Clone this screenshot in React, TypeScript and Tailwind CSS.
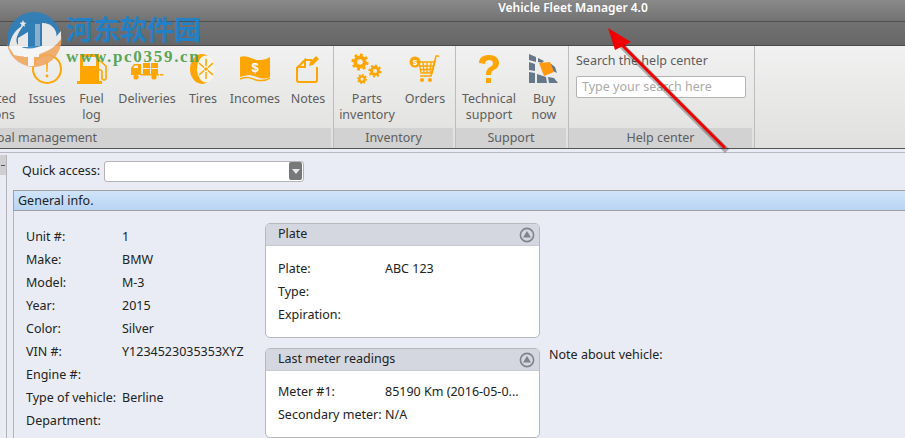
const font = "font-['Noto_Sans',sans-serif]";

function IssuesIcon() {
  return (
    <svg width="32" height="32" viewBox="0 0 32 32">
      <circle cx="16" cy="16" r="14" fill="none" stroke="#ffa500" strokeWidth="2" />
      <path d="M15 8h2l-.4 11h-1.2z" fill="#ffa500" />
      <circle cx="16" cy="23" r="1.400" fill="#ffa500" />
    </svg>
  );
}

function FuelIcon() {
  return (
    <svg width="32" height="32" viewBox="0 0 32 32">
      <path fillRule="evenodd" d="M4 1h19v27H4zM7 4v9h13V4z" fill="#ffa500" />
      <rect x="1" y="28" width="25" height="3" fill="#ffa500" />
      <path d="M23 7l7 6v12a2 2 0 0 1-4 0v-6a2 2 0 0 0-3-2" fill="none" stroke="#ffa500" strokeWidth="1.600" />
    </svg>
  );
}

function DeliveriesIcon() {
  return (
    <svg width="34" height="32" viewBox="0 0 34 32">
      <path d="M1 19v-4l3-4h7v11H1z" fill="#ffa500" />
      <path d="M3 15l2-2.500h3V15z" fill="#f0f0f0" />
      <rect x="13" y="10" width="7" height="5" fill="#ffa500" />
      <rect x="21" y="10" width="7" height="5" fill="#ffa500" />
      <rect x="13" y="16" width="7" height="5" fill="#ffa500" />
      <rect x="21" y="16" width="7" height="5" fill="#ffa500" />
      <rect x="11" y="21" width="18" height="1.500" fill="#ffa500" />
      <rect x="30" y="21" width="3.500" height="1.500" fill="#ffa500" />
      <circle cx="6" cy="24" r="2.600" fill="#ffa500" />
      <circle cx="24" cy="24" r="2.600" fill="#ffa500" />
    </svg>
  );
}

function TiresIcon() {
  return (
    <svg width="26" height="32" viewBox="0 0 26 32">
      <ellipse cx="12" cy="16" rx="12" ry="15" fill="#ffa500" />
      <ellipse cx="16" cy="16" rx="9" ry="13.500" fill="#f8f4ea" />
      <path d="M16 6v7M16 19v7M9 10l5 4.500M23 10l-5 4.500M9 22l5-4.500M23 22l-5-4.500" stroke="#ffa500" strokeWidth="1.500" />
      <circle cx="16" cy="16" r="1.800" fill="#ffa500" />
    </svg>
  );
}

function IncomesIcon() {
  return (
    <svg width="32" height="32" viewBox="0 0 32 32">
      <path d="M1 4c8-3 13 4 20 3 4 0 7-1 10-3v20c-8 4-13-1-20-2-4 0-7 1-10 2z" fill="#ffa500" />
      <path d="M1 26c6-3 11-1 16 1 5 1 10 1 14-2" fill="none" stroke="#ffa500" strokeWidth="1.500" />
      <text x="16" y="19" fontSize="13" fontWeight="700" fill="#fff" textAnchor="middle" fontFamily="Liberation Sans">$</text>
    </svg>
  );
}

function NotesIcon() {
  return (
    <svg width="26" height="32" viewBox="0 0 26 32">
      <path d="M10 7H17M22 14V27a2 2 0 0 1-2 2H4a2 2 0 0 1-2-2V15l8-8v7H3" fill="none" stroke="#ffa500" strokeWidth="2" />
      <path d="M15 9l6-6 3 3-6 6-4 1z" fill="#ffa500" />
    </svg>
  );
}

function Gear({ x, y, r }: { x: number; y: number; r: number }) {
  return (
    <g fill="none" stroke="#ffa500">
      <circle cx={x} cy={y} r={r * 0.55} strokeWidth={r * 0.45} />
      <circle cx={x} cy={y} r={r * 0.85} strokeWidth={r * 0.32} pathLength={16} strokeDasharray="1 1" />
    </g>
  );
}

function PartsIcon() {
  return (
    <svg width="32" height="32" viewBox="0 0 32 32">
      <Gear x={9} y={9} r={8.500} />
      <Gear x={24} y={18} r={6.500} />
      <Gear x={11} y={26} r={5} />
    </svg>
  );
}

function OrdersIcon() {
  return (
    <svg width="32" height="32" viewBox="0 0 32 32">
      <circle cx="6" cy="9" r="5.500" fill="#ffa500" />
      <text x="6" y="12" fontSize="8" fontWeight="700" fill="#fff" textAnchor="middle" fontFamily="Liberation Sans">$</text>
      <path d="M30 3h-3l-5 20H11" fill="none" stroke="#ffa500" strokeWidth="1.600" />
      <path d="M10 9h16l-3 11H12zM14 9l1 11M18 9v11M22 9l-1 11M11 13h14M12 16.500h12" fill="none" stroke="#ffa500" strokeWidth="1.300" />
      <circle cx="13" cy="27" r="2" fill="#ffa500" />
      <circle cx="21" cy="27" r="2" fill="#ffa500" />
    </svg>
  );
}

function SupportIcon() {
  return (
    <svg width="26" height="32" viewBox="0 0 26 32">
      <path d="M3 10C3 4 8 2 13 2c6 0 10 3 10 8 0 4-3 6-5 7-2 1-3 2-3 5h-5c0-4 1-6 4-8 2-1 3-2 3-4 0-2-2-3-4-3s-4 1-4 4z" fill="#ffa500" />
      <rect x="10" y="25" width="5" height="5" fill="#ffa500" />
    </svg>
  );
}

function BuyIcon() {
  return (
    <svg width="32" height="32" viewBox="0 0 32 32">
      <path d="M1 1l7 3v5l-7-2zM10 5l6 3-2 2-4-1zM1 9l6 2v7l-6-1zM1 19l6 1v10H1zM9 21l9 3 1 6H9zM20 24l6 1 4 5h-9zM22 10l5 4 2 6-4-2z" fill="#65788a" />
      <path d="M11 10l11-1 4 10-10 4z" fill="#ff9a10" />
    </svg>
  );
}

const globalItems = [
  { w: "w-[62px]", lines: ["Related", "actions"], icon: null },
  { w: "w-[44px]", lines: ["Issues"], icon: <IssuesIcon /> },
  { w: "w-[45px]", lines: ["Fuel", "log"], icon: <FuelIcon /> },
  { w: "w-[66px]", lines: ["Deliveries"], icon: <DeliveriesIcon /> },
  { w: "w-[46px]", lines: ["Tires"], icon: <TiresIcon /> },
  { w: "w-[58px]", lines: ["Incomes"], icon: <IncomesIcon /> },
  { w: "w-[48px]", lines: ["Notes"], icon: <NotesIcon /> },
];

function RibbonItem({ w, lines, icon }: { w: string; lines: string[]; icon: React.ReactNode }) {
  return (
    <div className={`${w} flex shrink-0 flex-col items-center`}>
      <div className="flex h-[36px] items-end justify-center">{icon}</div>
      <div className="mt-[6px] text-center text-[12.5px] leading-[16px] whitespace-nowrap text-[#5d5d5d]">
        {lines.map((l) => (
          <div key={l}>{l}</div>
        ))}
      </div>
    </div>
  );
}

function RibbonGroup({ w, label, children, end }: { w: string; label: string; children: React.ReactNode; end?: boolean }) {
  return (
    <div className={`${w} flex shrink-0 flex-col overflow-hidden border-r border-[#bdbdbd] pr-[2px]`}>
      <div className={`flex h-[82px] pt-[3px] ${end ? "-mr-[1px] justify-end" : ""}`}>{children}</div>
      <div className="h-[20px] bg-[#d2d2d2] text-center text-[12.5px] leading-[20px] text-[#5d5d5d]">{label}</div>
    </div>
  );
}

function Row({ label, value, labelW }: { label: string; value?: string; labelW: string }) {
  return (
    <div className="flex h-[23px] items-center whitespace-nowrap">
      <div className={`${labelW} shrink-0`}>{label}</div>
      <div>{value}</div>
    </div>
  );
}

function Card({ title, h, pt, children }: { title: string; h: string; pt: string; children: React.ReactNode }) {
  return (
    <div className={`${h} w-[275px] overflow-hidden rounded-[5px] border border-[#b8b8bc] bg-white`}>
      <div className="flex h-[22px] items-center justify-between border-b border-[#c8cad2] bg-[#d4d7e0] pr-[4px] pl-[12px]">
        <span>{title}</span>
        <svg width="16" height="16" viewBox="0 0 16 16">
          <circle cx="8" cy="8" r="6.600" fill="none" stroke="#80838c" strokeWidth="1.600" />
          <path d="M8 4l4 6.500H4z" fill="#80838c" />
        </svg>
      </div>
      <div className={`${pt} px-[12px]`}>{children}</div>
    </div>
  );
}

export default function App() {
  return (
    <div className={`${font} relative h-[438px] w-[905px] overflow-hidden bg-[#e9ecf4] text-[12.5px] text-[#222]`}>
      <div className="h-[22px] border-b border-[#505050] bg-gradient-to-b from-[#8a8a8a] to-[#727272] text-center text-[12px] leading-[15px] font-semibold text-white">
        <div className="pl-[241px]">Vehicle Fleet Manager 4.0</div>
      </div>
      <div className="h-[24px] border-b border-[#4a4a4a] bg-gradient-to-b from-[#727272] to-[#666]" />

      <div className="flex h-[103px] border-b border-[#555] bg-gradient-to-b from-[#f1f1f1] to-[#e0e0de]">
        <div className="-ml-[257px] flex">
          <RibbonGroup w="w-[591px]" label="Global management" end>
            {globalItems.map((it) => (
              <RibbonItem key={it.lines[0]} {...it} />
            ))}
          </RibbonGroup>
        </div>
        <RibbonGroup w="w-[122px]" label="Inventory">
          <RibbonItem w="w-[66px]" lines={["Parts", "inventory"]} icon={<PartsIcon />} />
          <RibbonItem w="w-[50px]" lines={["Orders"]} icon={<OrdersIcon />} />
        </RibbonGroup>
        <RibbonGroup w="w-[113px]" label="Support">
          <RibbonItem w="w-[66px]" lines={["Technical", "support"]} icon={<SupportIcon />} />
          <RibbonItem w="w-[44px]" lines={["Buy", "now"]} icon={<BuyIcon />} />
        </RibbonGroup>
        <RibbonGroup w="w-[186px]" label="Help center">
          <div className="w-full pt-[3px] pl-[7px]">
            <div className="text-[#5d5d5d]">Search the help center</div>
            <div className="mt-[5px] h-[22px] w-[170px] rounded-[2px] border border-[#b4b4b4] bg-white px-[5px] leading-[20px] text-[#aaa]">
              Type your search here
            </div>
          </div>
        </RibbonGroup>
      </div>

      <div className="mt-[3px] h-[1px] bg-[#b8bac0]" />

      <div className="flex">
        <div className="mt-[2px] h-[290px] w-[7px] shrink-0 border-r border-[#b4b4b8]">
          <div className="flex h-[20px] items-center bg-[#cfcfd2]">
            <div className="ml-[1px] h-[1px] w-[4px] bg-[#555]" />
          </div>
        </div>
        <div className="min-w-0 flex-1 pt-[6px] pl-[6px]">
          <div className="flex h-[24px] items-center pl-[9px]">
            <span className="w-[82px]">Quick access:</span>
            <div className="flex h-[21px] w-[200px] items-center justify-end rounded-[3px] border border-[#b4b4b4] bg-white pr-[1px]">
              <div className="flex h-[18px] w-[13px] items-center justify-center rounded-[2px] bg-[#77787a]">
                <div className="h-0 w-0 border-x-[4px] border-t-[5px] border-x-transparent border-t-[#e8e8e8]" />
              </div>
            </div>
          </div>
          <div className="mt-[7px] h-[21px] border-y border-l border-[#a0a0a0] bg-gradient-to-b from-[#d0e4fb] to-[#b9d4f3] pl-[4px] leading-[19px]">
            General info.
          </div>
          <div className="flex border-l border-[#b4b4b8] pt-[12px]">
            <div className="w-[251px] shrink-0 pt-[3px] pl-[12px]">
              <Row labelW="w-[96px]" label="Unit #:" value="1" />
              <Row labelW="w-[96px]" label="Make:" value="BMW" />
              <Row labelW="w-[96px]" label="Model:" value="M-3" />
              <Row labelW="w-[96px]" label="Year:" value="2015" />
              <Row labelW="w-[96px]" label="Color:" value="Silver" />
              <Row labelW="w-[96px]" label="VIN #:" value="Y1234523035353XYZ" />
              <Row labelW="w-[96px]" label="Engine #:" />
              <Row labelW="w-[96px]" label="Type of vehicle:" value="Berline" />
              <Row labelW="w-[96px]" label="Department:" />
            </div>
            <div className="flex shrink-0 flex-col gap-[10px]">
              <Card title="Plate" h="h-[115px]" pt="pt-[12px]">
                <Row labelW="w-[107px]" label="Plate:" value="ABC 123" />
                <Row labelW="w-[107px]" label="Type:" />
                <Row labelW="w-[107px]" label="Expiration:" />
              </Card>
              <Card title="Last meter readings" h="h-[90px]" pt="pt-[10px]">
                <Row labelW="w-[107px]" label="Meter #1:" value="85190 Km (2016-05-0..." />
                <Row labelW="w-[107px]" label="Secondary meter:" value="N/A" />
              </Card>
            </div>
            <div className="mt-[123px] ml-[9px]">Note about vehicle:</div>
          </div>
        </div>
      </div>

      {/* watermark over the title bar */}
      <svg className="absolute top-[11px] left-[6px] opacity-90" width="56" height="56" viewBox="0 0 56 56">
        <circle cx="28" cy="28" r="27" fill="#2c80bd" />
        <path d="M1 33C10 48 40 44 55 24A27 27 0 0 1 1 33z" fill="#f0a860" />
        <path d="M3 36C5 24 10 18 18 14 10 24 9 30 12 34 22 42 42 36 55 20V28C44 44 20 48 8 44z" fill="#f6f6f6" />
        <path d="M18 42H33V46H28V55H22V46H18z" fill="#f6f6f6" />
        <path d="M12 27L22 21V36H12z" fill="#f6f6f6" />
        <path d="M29 13h5V35h-5z" fill="#8fb7d6" />
        <path d="M36 12C46 12 52 20 50 26 48 30 42 33 36 35z" fill="#f6f6f6" />
        <path d="M17 9l1 2.500 2.500.3-2 1.700.6 2.500-2.100-1.400-2.100 1.400.6-2.500-2-1.700 2.500-.3z" fill="#f6f6f6" />
      </svg>
      <div className="absolute top-[10px] left-[66px] font-['Noto_Sans_CJK_SC',sans-serif] text-[27px] leading-[38px] font-bold whitespace-nowrap text-[#2180c6]">
        河东软件园
      </div>
      <div className="absolute top-[47px] left-[66px] font-['Liberation_Serif',serif] text-[17px] leading-[20px] font-bold tracking-[1.7px] whitespace-nowrap text-[#59a659]">
        www.pc0359.cn
      </div>

      {/* red annotation arrow */}
      <svg className="absolute top-0 left-0" width="905" height="438" viewBox="0 0 905 438">
        <path d="M727 151L617 41" stroke="#000" strokeOpacity="0.28" strokeWidth="6" />
        <path d="M725 148L618 41" stroke="#f00000" strokeWidth="3" />
        <path d="M608 28L631 42 615 50z" fill="#f00000" />
      </svg>
    </div>
  );
}
